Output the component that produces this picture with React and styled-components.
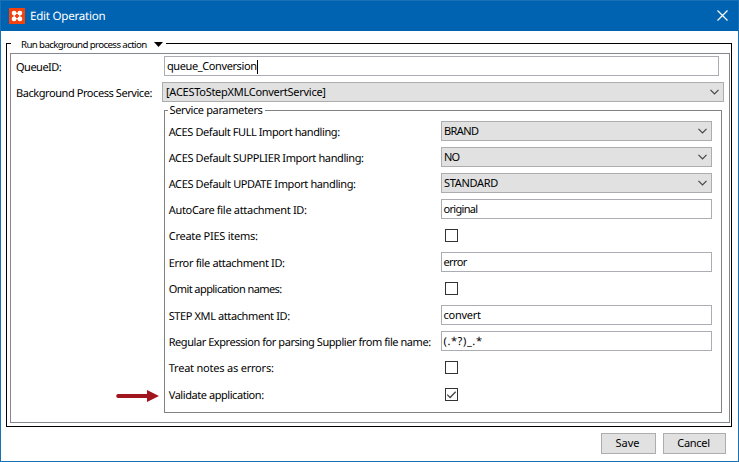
import React from "react";
import styled, { createGlobalStyle } from "styled-components";

const GlobalStyle = createGlobalStyle`
  *, *::before, *::after { box-sizing: border-box; }
  body {
    margin: 0;
    background: #fff;
    color: #000;
    font-family: "Noto Sans", "DejaVu Sans Condensed", sans-serif;
    font-size: 11px;
    text-rendering: geometricPrecision;
  }
`;

const Text = styled.span`
  white-space: pre;
  letter-spacing: ${(p) => p.$track || 0}px;
`;

const Window = styled.main`
  display: flex;
  flex-direction: column;
  width: 739px;
  height: 462px;
  border: 1px solid #1a70b5;
  background: #fff;
`;

const TitleBar = styled.header`
  display: flex;
  align-items: center;
  flex: none;
  height: 30px;
  padding: 0 10px 0 8px;
  background: #0063b1;
  color: #fff;
`;

const Title = styled.h1`
  flex: 1;
  margin: 0 0 0 5px;
  padding-top: 2px;
  font-size: 11.6px;
  line-height: 16px;
  font-weight: 400;
`;

const Content = styled.div`
  display: flex;
  flex-direction: column;
  padding: 7px 6px 0 5px;
`;

const OuterLegend = styled.button`
  display: flex;
  align-items: center;
  width: 155px;
  height: 14px;
  margin-left: 4px;
  padding: 0 3px 0 10px;
  border: 0;
  background: #fff;
  color: #000;
  font-family: inherit;
  font-size: 9.7px;
  line-height: 14px;

  > ${Text} {
    padding-top: 4px;
  }
`;

const LegendArrow = styled.svg`
  margin-left: auto;
  margin-top: 3px;
`;

const OuterFrame = styled.section`
  height: 384px;
  margin-top: 5px;
  padding: 0 1px 3px 3px;
  border: 1px solid #000;

  > ${OuterLegend} {
    margin-top: -8px;
    margin-left: 1px;
  }
`;

const ActionPanel = styled.div`
  display: grid;
  grid-template-columns: 151px 1fr;
  grid-template-rows: 20px 20px 303px;
  row-gap: 6px;
  height: 370px;
  margin-top: 3px;
  padding: 2px 5px 0 0;
  border: 1px solid #828790;
`;

const Label = styled.label`
  padding: 2px 0 0 5px;
  line-height: 20px;
  white-space: nowrap;
`;

const Field = styled.div`
  display: flex;
  align-items: center;
  height: 20px;
  margin: ${(p) => (p.$inset ? "0 5px 0 2px" : "0")};
  padding-top: 1px;
  padding-left: ${(p) => (p.$inset ? 2 : 1.5)}px;
  border: 1px solid #abadb3;
  background: #fff;
  line-height: 18px;
`;

const Caret = styled.i`
  width: 1px;
  height: 14px;
  background: #000;
`;

const SelectBox = styled.button`
  display: flex;
  align-items: center;
  justify-content: space-between;
  width: 100%;
  height: 20px;
  padding: 0 4px 0 ${(p) => p.$pad || 2}px;
  border: 1px solid #adadad;
  background: #e1e1e1;
  color: #000;
  font-family: inherit;
  font-size: 11px;
  line-height: 18px;
`;

const ServiceCell = styled.div`
  display: flex;
  padding: 2px 2px 0 2px;
`;

const ServiceFrame = styled.section`
  flex: 1;
  height: 303px;
  border: 1px solid #828282;
`;

const ServiceLegend = styled.h2`
  width: 97px;
  height: 14px;
  margin: -8px 0 0 3px;
  padding: 1px 0 0 1.5px;
  background: #fff;
  font-size: 11px;
  font-weight: 400;
  line-height: 14px;
`;

const ParamList = styled.div`
  display: flex;
  flex-direction: column;
  gap: 6px;
  padding: 4px 9px 0 0;
`;

const ParamRow = styled.div`
  display: grid;
  grid-template-columns: 276px 1fr;
  height: ${(p) => (p.$tall ? 21 : 20)}px;

  > ${Label} {
    padding-left: 3.7px;
  }
`;

const CheckBox = styled.span`
  display: flex;
  align-items: center;
  justify-content: center;
  width: 13px;
  height: 13px;
  margin: 4px 0 0 4px;
  border: 1px solid #333;
  background: #fff;
`;

const Pointer = styled.svg`
  grid-column: 1;
  grid-row: 3;
  align-self: start;
  justify-self: end;
  margin: 282px 3px 0 0;
`;

const Footer = styled.footer`
  display: flex;
  justify-content: flex-end;
  gap: 7px;
  padding: 6px 12px 0 0;
`;

const Button = styled.button`
  width: ${(p) => p.$width}px;
  height: 21px;
  padding: 0 2px 1px 0;
  border: 1px solid #adadad;
  background: #e1e1e1;
  color: #000;
  font-family: inherit;
  font-size: 11px;
  line-height: 18px;
`;

const AppIcon = () => (
  <svg width="16" height="16" viewBox="0 0 16 16">
    <rect width="16" height="16" fill="#f4420e" />
    <path d="M5.3 5.3h5.4v5.4H5.3z" fill="none" stroke="#fff" strokeWidth="1.1" />
    <g fill="#fff">
      <circle cx="5.1" cy="5.1" r="2.4" />
      <circle cx="10.9" cy="5.1" r="2.4" />
      <circle cx="5.1" cy="10.9" r="2.4" />
      <circle cx="10.9" cy="10.9" r="2.4" />
    </g>
  </svg>
);

const CloseIcon = styled.svg`
  margin-top: -1px;
`;

const Chevron = () => (
  <svg width="9" height="6" viewBox="0 0 9 6">
    <path d="M.5.8l4 4 4-4" fill="none" stroke="#444" strokeWidth="1.2" />
  </svg>
);

const Select = ({ text, track, pad }) => (
  <SelectBox $pad={pad}>
    <Text $track={track}>{text}</Text>
    <Chevron />
  </SelectBox>
);

const params = [
  ["ACES Default FULL Import handling:", -0.415, "select", "BRAND", -0.6],
  ["ACES Default SUPPLIER Import handling:", -0.386, "select", "NO", -0.8],
  ["ACES Default UPDATE Import handling:", -0.384, "select", "STANDARD", -0.3],
  ["AutoCare file attachment ID:", -0.31, "text", "original", -0.7],
  ["Create PIES items:", -0.255, "check", false],
  ["Error file attachment ID:", -0.35, "text", "error", -0.6],
  ["Omit application names:", -0.573, "check", false],
  ["STEP XML attachment ID:", -0.392, "text", "convert", -0.25],
  ["Regular Expression for parsing Supplier from file name:", -0.441, "text", "(.*?)_.*", 0.6],
  ["Treat notes as errors:", -0.211, "check", false],
  ["Validate application:", -0.44, "check", true],
];

function Param({ data }) {
  const [label, track, kind, value, valueTrack] = data;
  return (
    <ParamRow $tall={kind === "check"}>
      <Label>
        <Text $track={track}>{label}</Text>
      </Label>
      {kind === "select" && <Select text={value} track={valueTrack} />}
      {kind === "text" && (
        <Field>
          <Text $track={valueTrack}>{value}</Text>
        </Field>
      )}
      {kind === "check" && (
        <CheckBox>
          {value && (
            <svg width="11" height="11" viewBox="0 0 11 11">
              <path d="M1.2 5.6l2.9 2.9 5.6-5.7" fill="none" stroke="#444" strokeWidth="1.3" />
            </svg>
          )}
        </CheckBox>
      )}
    </ParamRow>
  );
}

export default function App() {
  return (
    <>
      <GlobalStyle />
      <Window>
        <TitleBar>
          <AppIcon />
          <Title>
            <Text $track={-0.25}>Edit Operation</Text>
          </Title>
          <CloseIcon width="11" height="11" viewBox="0 0 11 11">
            <path d="M.5.5l10 10M10.5.5l-10 10" stroke="#fff" strokeWidth="1.15" />
          </CloseIcon>
        </TitleBar>
        <Content>
          <OuterFrame>
            <OuterLegend>
              <Text $track={-0.61}>Run background process action</Text>
              <LegendArrow width="9" height="5" viewBox="0 0 9 5">
                <path d="M0 0h9L4.5 5z" />
              </LegendArrow>
            </OuterLegend>
            <ActionPanel>
              <Label>
                <Text $track={-0.5}>QueueID:</Text>
              </Label>
              <Field $inset>
                <Text $track={-0.4}>queue_Conversion</Text>
                <Caret />
              </Field>
              <Label>
                <Text $track={-0.43}>Background Process Service:</Text>
              </Label>
              <Select text="[ACESToStepXMLConvertService]" track={-0.27} pad={3} />
              <Pointer width="43" height="12" viewBox="0 0 43 12">
                <path d="M2.2 6H34" stroke="#a0151e" strokeWidth="4" strokeLinecap="round" />
                <path d="M31 0l12 6-12 6z" fill="#a0151e" />
              </Pointer>
              <ServiceCell>
                <ServiceFrame>
                  <ServiceLegend>
                    <Text $track={-0.36}>Service parameters</Text>
                  </ServiceLegend>
                  <ParamList>
                    {params.map((p) => (
                      <Param key={p[0]} data={p} />
                    ))}
                  </ParamList>
                </ServiceFrame>
              </ServiceCell>
            </ActionPanel>
          </OuterFrame>
        </Content>
        <Footer>
          <Button $width={55}>
            <Text>Save</Text>
          </Button>
          <Button $width={63}>
            <Text $track={-0.3}>Cancel</Text>
          </Button>
        </Footer>
      </Window>
    </>
  );
}
